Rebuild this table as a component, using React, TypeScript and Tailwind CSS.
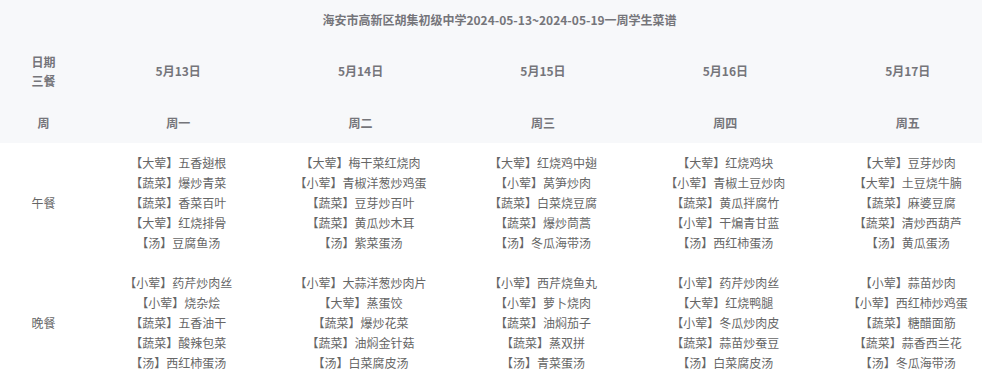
import React from "react";

const dates = ["5月13日", "5月14日", "5月15日", "5月16日", "5月17日"];
const weeks = ["周一", "周二", "周三", "周四", "周五"];

const lunch: string[][] = [
  ["【大荤】五香翅根", "【蔬菜】爆炒青菜", "【蔬菜】香菜百叶", "【大荤】红烧排骨", "【汤】豆腐鱼汤"],
  ["【大荤】梅干菜红烧肉", "【小荤】青椒洋葱炒鸡蛋", "【蔬菜】豆芽炒百叶", "【蔬菜】黄瓜炒木耳", "【汤】紫菜蛋汤"],
  ["【大荤】红烧鸡中翅", "【小荤】莴笋炒肉", "【蔬菜】白菜烧豆腐", "【蔬菜】爆炒茼蒿", "【汤】冬瓜海带汤"],
  ["【大荤】红烧鸡块", "【小荤】青椒土豆炒肉", "【蔬菜】黄瓜拌腐竹", "【小荤】干煸青甘蓝", "【汤】西红柿蛋汤"],
  ["【大荤】豆芽炒肉", "【大荤】土豆烧牛腩", "【蔬菜】麻婆豆腐", "【蔬菜】清炒西葫芦", "【汤】黄瓜蛋汤"],
];

const dinner: string[][] = [
  ["【小荤】药芹炒肉丝", "【小荤】烧杂烩", "【蔬菜】五香油干", "【蔬菜】酸辣包菜", "【汤】西红柿蛋汤"],
  ["【小荤】大蒜洋葱炒肉片", "【大荤】蒸蛋饺", "【蔬菜】爆炒花菜", "【蔬菜】油焖金针菇", "【汤】白菜腐皮汤"],
  ["【小荤】西芹烧鱼丸", "【小荤】萝卜烧肉", "【蔬菜】油焖茄子", "【蔬菜】蒸双拼", "【汤】青菜蛋汤"],
  ["【小荤】药芹炒肉丝", "【大荤】红烧鸭腿", "【小荤】冬瓜炒肉皮", "【蔬菜】蒜苗炒蚕豆", "【汤】白菜腐皮汤"],
  ["【小荤】蒜苗炒肉", "【小荤】西红柿炒鸡蛋", "【蔬菜】糖醋面筋", "【蔬菜】蒜香西兰花", "【汤】冬瓜海带汤"],
];

const font = { fontFamily: '"Noto Sans CJK SC", "Noto Sans", sans-serif' };

function MealRow({ label, data }: { label: string; data: string[][] }) {
  return (
    <div className="grid grid-cols-[87px_repeat(5,182.4px)] h-[120px] items-center">
      <div className="text-center">{label}</div>
      {data.map((col, i) => (
        <div key={i} className="flex flex-col items-center">
          {col.map((t, j) => (
            <div key={j} className="leading-[20px] whitespace-nowrap">
              {t}
            </div>
          ))}
        </div>
      ))}
    </div>
  );
}

export default function App() {
  return (
    <div className="w-[999px] h-[388px] bg-white text-[12px] text-[#666666] overflow-hidden" style={font}>
      <div className="w-[982px] h-[143px] bg-[#f7f8fa] font-bold text-[#75757a]">
        <div className="w-[999px]">
          <div className="h-[40px] flex items-center justify-center whitespace-nowrap">
            海安市高新区胡集初级中学2024-05-13~2024-05-19一周学生菜谱
          </div>
          <div className="grid grid-cols-[87px_repeat(5,182.4px)] h-[62px] items-center">
            <div className="flex flex-col items-center leading-[19px]">
              <div>日期</div>
              <div>三餐</div>
            </div>
            {dates.map((d) => (
              <div key={d} className="text-center">
                {d}
              </div>
            ))}
          </div>
          <div className="grid grid-cols-[87px_repeat(5,182.4px)] h-[41px] items-center">
            <div className="text-center">周</div>
            {weeks.map((w) => (
              <div key={w} className="text-center">
                {w}
              </div>
            ))}
          </div>
        </div>
      </div>
      <MealRow label="午餐" data={lunch} />
      <MealRow label="晚餐" data={dinner} />
    </div>
  );
}
